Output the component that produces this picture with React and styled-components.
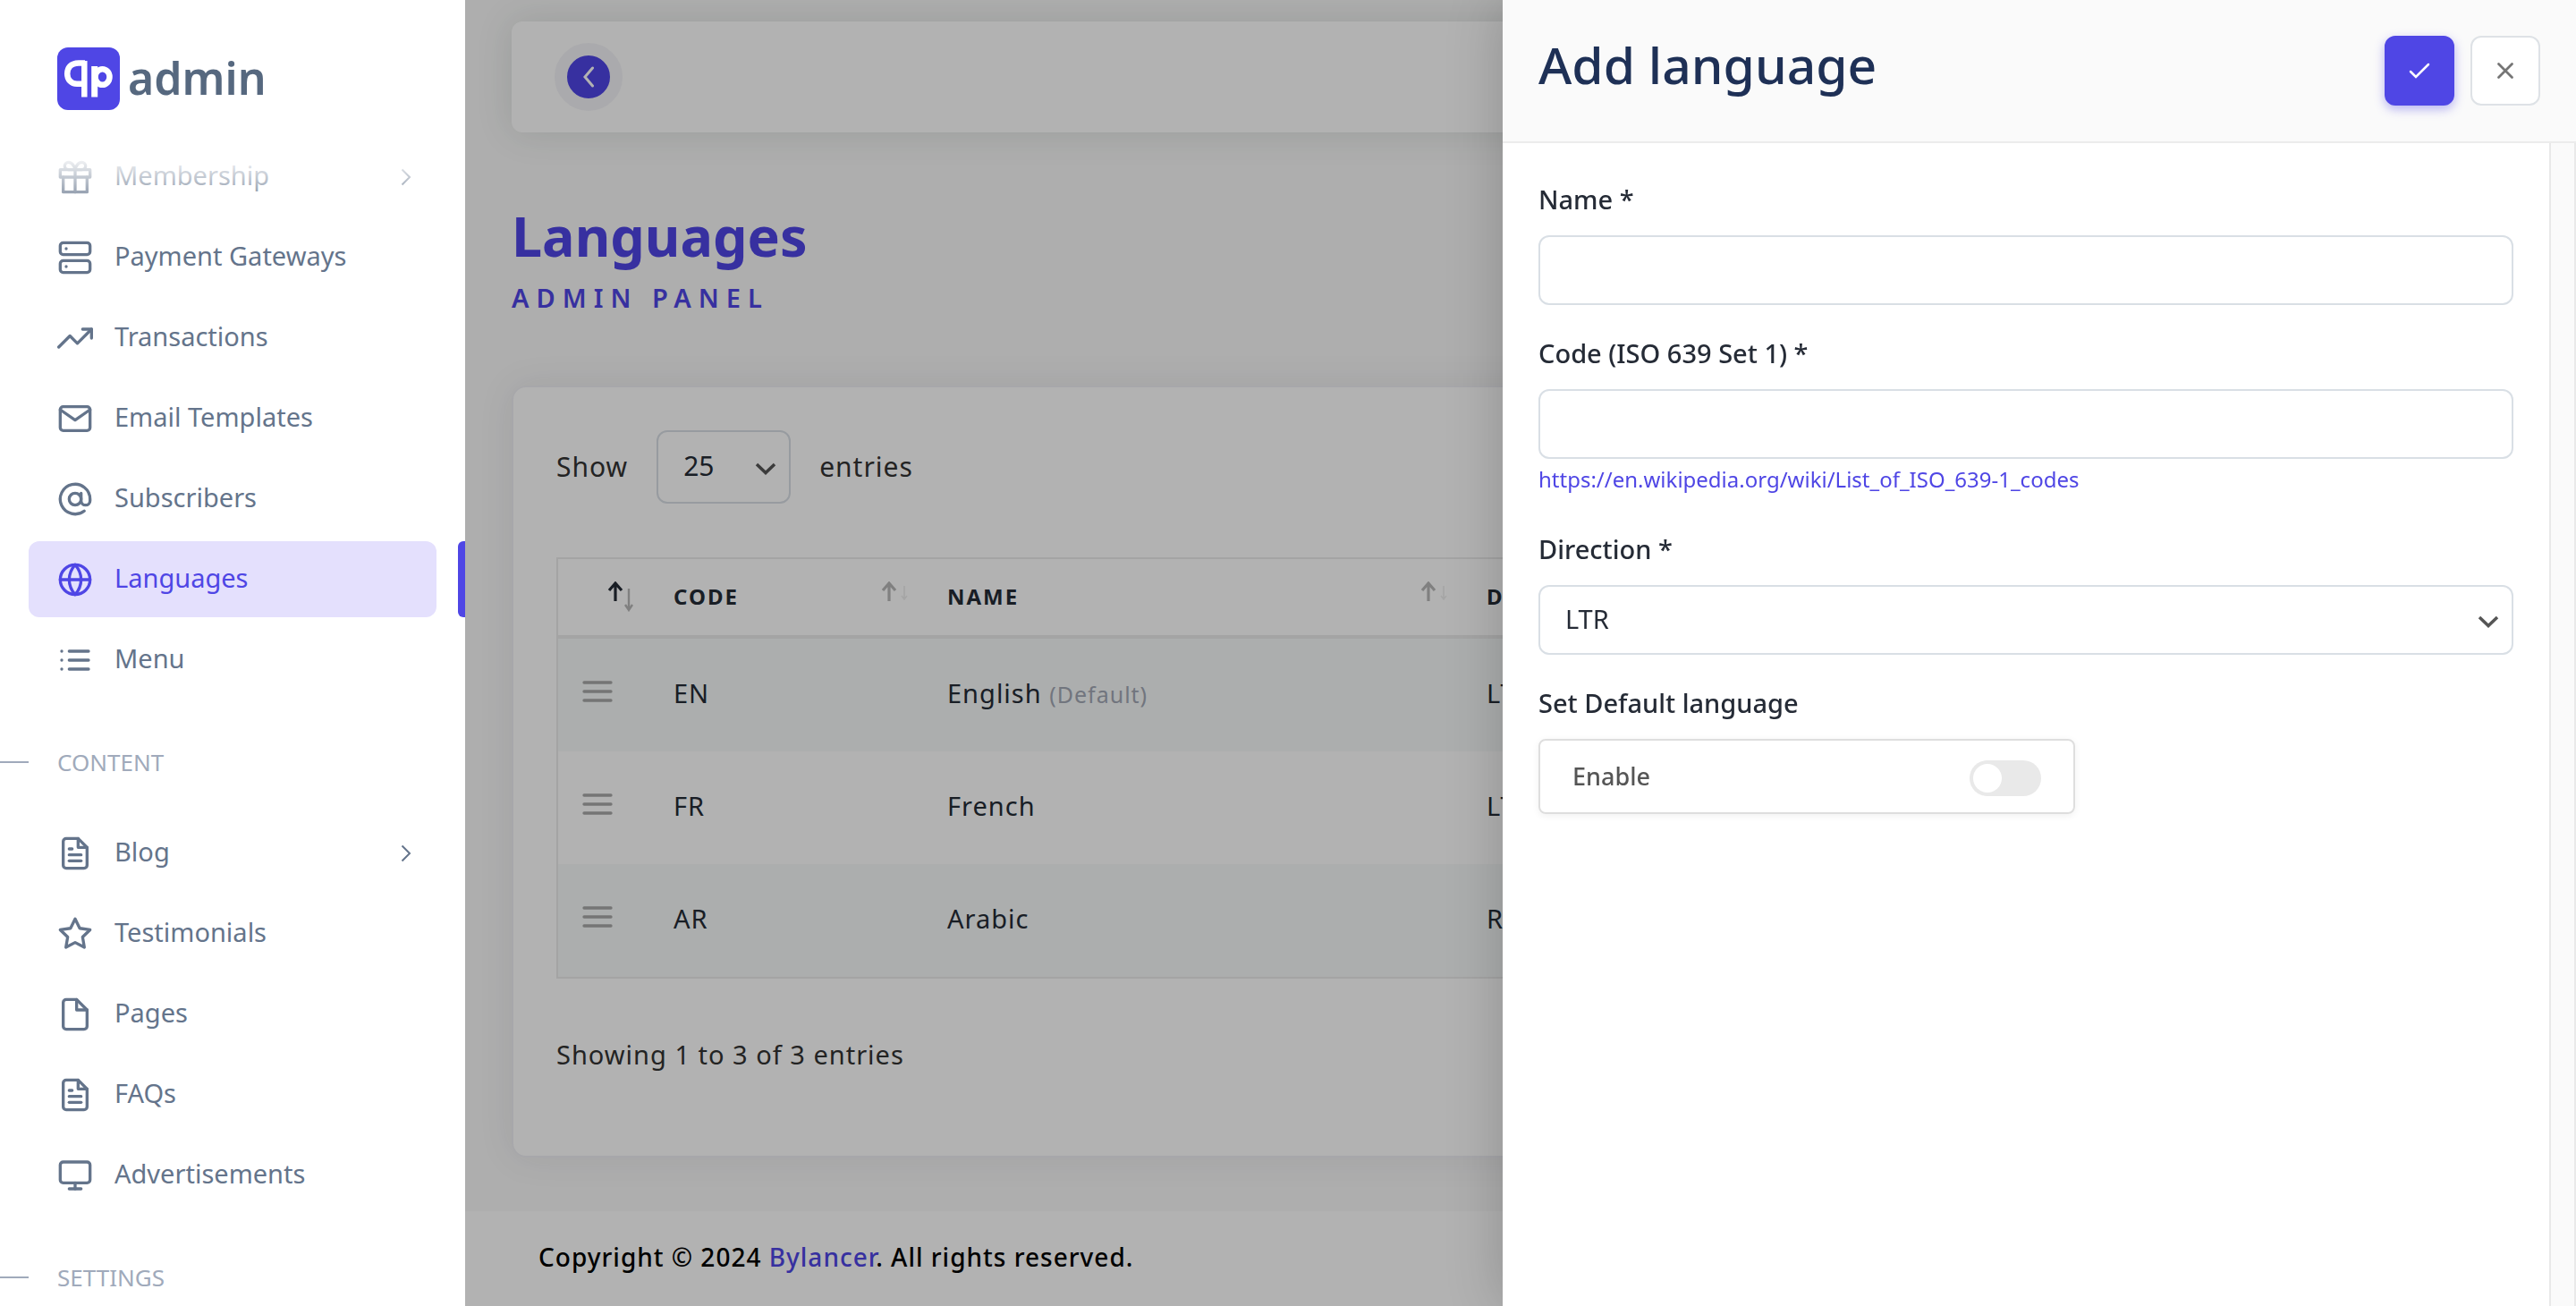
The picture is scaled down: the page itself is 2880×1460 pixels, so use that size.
import React, { useState } from "react";
import styled, { createGlobalStyle, css } from "styled-components";
import {
  FiAtSign,
  FiFile,
  FiFileText,
  FiGift,
  FiGlobe,
  FiList,
  FiMail,
  FiMenu,
  FiMonitor,
  FiServer,
  FiStar,
  FiTrendingUp
} from "react-icons/fi";

const GlobalStyle = createGlobalStyle`
  * {
    box-sizing: border-box;
  }

  body {
    margin: 0;
    background: #f9f9f9;
    color: #252b36;
    font-family: "Noto Sans", "Open Sans", sans-serif;
    font-size: 29px;
    line-height: 50px;
  }

  button, input, select {
    font: inherit;
    color: inherit;
  }

  a {
    color: #4f46e5;
    text-decoration: none;
  }
`;

const Layout = styled.div`
  display: flex;
  height: 100vh;
  overflow: hidden;
`;

/* Sidebar */

const Sidebar = styled.aside`
  position: relative;
  flex: 0 0 520px;
  height: 100vh;
  overflow: hidden;
  background: #fff;
`;

const Brand = styled.a`
  display: flex;
  align-items: center;
  gap: 9px;
  height: 152px;
  padding: 24px 64px 0;
  color: #56687f;
`;

const BrandName = styled.span`
  padding-bottom: 2px;
  font-size: 50px;
  font-weight: 600;
  line-height: 70px;
`;

const TopFade = styled.div`
  position: absolute;
  top: 152px;
  left: 0;
  right: 0;
  height: 85px;
  background: linear-gradient(#fff 25%, rgba(255, 255, 255, 0));
  pointer-events: none;
`;

const NavList = styled.ul`
  list-style: none;
  margin: 0;
  padding: 0;
`;

const NavItem = styled.li`
  display: flex;
  justify-content: space-between;
  padding: 3px 0 2px 32px;
`;

const NavLink = styled.a`
  display: flex;
  align-items: center;
  gap: 24px;
  width: 456px;
  height: 85px;
  padding: 0 28px 0 32px;
  border-radius: 12px;
  color: #64748b;

  ${props =>
    props.$active &&
    css`
      background: #e4e0fd;
      color: #4f46e5;
    `}
`;

const NavLabel = styled.span`
  flex: 1;
  padding-bottom: 4px;
`;

const ActiveMark = styled.span`
  width: 8px;
  border-radius: 6px 0 0 6px;
  background: #4f46e5;
`;

const NavCategory = styled.h2`
  display: flex;
  align-items: center;
  gap: 32px;
  height: 126px;
  padding-top: 14px;
  margin: 0;
  color: #a0aabb;
  font-size: 26px;
  font-weight: 400;
  text-transform: uppercase;

  &::before {
    content: "";
    width: 32px;
    height: 2px;
    background: #a0aabb;
  }
`;

/* Main column */

const Main = styled.main`
  position: relative;
  display: flex;
  flex: 1;
  flex-direction: column;
  min-width: 0;
  background: #f9f9f9;
`;

const Content = styled.div`
  padding: 24px 52px 60px;
`;

const TopBar = styled.header`
  padding: 24px 48px;
  border-radius: 12px;
  background: #fff;
  box-shadow: 0 0 40px rgba(30, 60, 50, 0.13);
`;

const BackButton = styled.button`
  display: flex;
  align-items: center;
  justify-content: center;
  width: 76px;
  height: 76px;
  padding: 0;
  border: 14px solid #f4f4f8;
  border-radius: 50%;
  background: #4f46e5;
  color: #fff;
`;

const PageHeading = styled.div`
  margin: 72px 0 73px;
  color: #4f46e5;
`;

const PageTitle = styled.h1`
  margin: 0;
  font-size: 61px;
  font-weight: 700;
  line-height: 88px;
`;

const PageSubtitle = styled.p`
  margin: 0;
  font-weight: 600;
  letter-spacing: 8px;
  text-transform: uppercase;
`;

const Card = styled.section`
  padding: 48px 48px 86px;
  border: 2px solid #f0f0f4;
  border-radius: 16px;
  background: #fff;
  box-shadow: 0 0 40px rgba(40, 40, 70, 0.08);
  letter-spacing: 1px;
`;

const LengthRow = styled.label`
  display: flex;
  align-items: center;
  gap: 32px;
  margin-bottom: 60px;
  color: #333;
  font-size: 30px;
`;

const SelectWrap = styled.div`
  position: relative;
  width: ${props => props.$width || "100%"};

  svg {
    position: absolute;
    top: calc(50% - 5px);
    right: 16px;
    color: #555;
    pointer-events: none;
  }
`;

const Select = styled.select`
  display: block;
  width: 100%;
  height: ${props => (props.$tall ? "82px" : "78px")};
  padding: 0 28px 2px;
  border: 2px solid #d9dfe5;
  border-radius: 12px;
  background: #fff;
  color: #252b36;
  appearance: none;
`;

const Table = styled.table`
  width: 100%;
  border: 2px solid #ebebeb;
  border-collapse: separate;
  border-spacing: 0;
  table-layout: fixed;
`;

const HeadCell = styled.th`
  width: ${props => props.$width};
  height: 89px;
  padding: 0 20px 2px 24px;
  border-bottom: 4px solid #ebebeb;
  font-size: 24px;
  font-weight: 700;
  letter-spacing: 2px;
  line-height: 36px;
  text-align: left;
  text-transform: uppercase;
`;

const HeadContent = styled.div`
  display: flex;
  align-items: center;
  justify-content: space-between;
`;

const Row = styled.tr`
  background: #fff;

  &:nth-child(odd) {
    background: #f7faf9;
  }
`;

const Cell = styled.td`
  height: 126px;
  padding: 0 24px 4px;
  vertical-align: middle;
`;

const HandleCell = styled(Cell)`
  padding-bottom: 8px;
  color: #a8a8a8;

  svg {
    display: block;
  }
`;

const DefaultTag = styled.small`
  color: #a3a8b5;
  font-size: 25px;
`;

const TableInfo = styled.p`
  margin: 60px 0 2px;
  color: #333;
`;

const Footer = styled.footer`
  flex: 1;
  padding: 26px 82px;
  background: #fff;
  color: #000;
  font-size: 28px;
  font-weight: 500;
  letter-spacing: 1px;
`;

const Backdrop = styled.div`
  position: absolute;
  inset: 0;
  background: rgba(0, 0, 0, 0.3);
`;

/* Slide-over panel */

const Drawer = styled.aside`
  position: fixed;
  top: 0;
  right: 0;
  bottom: 0;
  display: flex;
  flex-direction: column;
  width: 1200px;
  max-width: 100%;
  background: #fff;
  box-shadow: 0 0 60px rgba(0, 0, 0, 0.2);
`;

const DrawerHeader = styled.header`
  display: flex;
  align-items: flex-start;
  gap: 18px;
  padding: 40px;
  border-bottom: 2px solid #ececec;
  background: #fafafa;
`;

const DrawerTitle = styled.h2`
  flex: 1;
  margin: 0;
  color: #1e3056;
  font-size: 57px;
  font-weight: 500;
  line-height: 64px;
`;

const IconButton = styled.button`
  display: flex;
  align-items: center;
  justify-content: center;
  width: 78px;
  height: 78px;
  padding: 0;
  border: 2px solid #dee2e6;
  border-radius: 12px;
  background: #fff;
  color: #757575;

  ${props =>
    props.$primary &&
    css`
      border-color: #4f46e5;
      background: #4f46e5;
      color: #fff;
      box-shadow: 0 4px 12px rgba(79, 70, 229, 0.4);
    `}
`;

const DrawerBody = styled.div`
  display: flex;
  flex: 1;
`;

const ScrollTrack = styled.div`
  width: 30px;
  border: solid #e9e9e9;
  border-width: 0 2px;
  background: #fafafa;
`;

const Form = styled.form`
  flex: 1;
  padding: 40px;
`;

const Field = styled.div`
  margin-bottom: 31px;
`;

const FieldLabel = styled.label`
  display: block;
  margin-bottom: 18px;
  font-weight: 500;
  line-height: 45px;
`;

const TextInput = styled.input`
  display: block;
  width: 100%;
  height: 78px;
  padding: 0 28px;
  border: 2px solid #d9dfe5;
  border-radius: 12px;
  outline: none;
`;

const HelpLink = styled.a`
  display: block;
  margin: 2px 0 34px;
  font-size: 24px;
  line-height: 42px;
`;

const ToggleBox = styled.label`
  display: flex;
  align-items: center;
  justify-content: space-between;
  width: 600px;
  height: 84px;
  padding: 0 36px;
  border: 2px solid #dedede;
  border-radius: 8px;
  color: #555;
  font-size: 27px;
  font-weight: 500;
  box-shadow: 0 2px 8px rgba(0, 0, 0, 0.06);
`;

const Toggle = styled.input`
  width: 80px;
  height: 40px;
  margin: 4px 0 0;
  padding: 4px;
  border-radius: 20px;
  background: #e9e9e9;
  appearance: none;

  &::before {
    content: "";
    display: block;
    width: 32px;
    height: 32px;
    border-radius: 50%;
    background: #fff;
  }

  &:checked {
    background: #4f46e5;
  }

  &:checked::before {
    margin-left: auto;
  }
`;

const Logo = () => (
  <svg width="70" height="70" viewBox="0 0 70 70" fill="none">
    <rect width="70" height="70" rx="12" fill="#4f46e5" />
    <g stroke="#fff" strokeWidth="6.500">
      <path d="M30.300 55.500V15" />
      <path d="M31 17.500H24C15 17.500 11.200 23 11.200 29.500S15.500 40.800 22 40.800H31" />
      <path d="M41.700 55.500V21" strokeWidth="7" />
      <ellipse cx="50.500" cy="33" rx="8" ry="8.800" />
    </g>
  </svg>
);

const ChevronRight = () => (
  <svg width="12" height="20" viewBox="0 0 12 20" fill="none">
    <path d="M1.500 1.500L10 10l-8.500 8.500" stroke="currentColor" strokeWidth="2" />
  </svg>
);

const ChevronLeft = () => (
  <svg width="14" height="24" viewBox="0 0 14 24" fill="none">
    <path
      d="M11.500 2L3 12l8.500 10"
      stroke="currentColor"
      strokeWidth="3"
      strokeLinecap="round"
    />
  </svg>
);

const ChevronDown = () => (
  <svg width="24" height="14" viewBox="0 0 24 14" fill="none">
    <path d="M2 2l10 9.500L22 2" stroke="currentColor" strokeWidth="3.500" />
  </svg>
);

const CheckIcon = () => (
  <svg width="26" height="20" viewBox="0 0 26 20" fill="none">
    <path
      d="M3 11l6 6L23 3"
      stroke="currentColor"
      strokeWidth="2.500"
      strokeLinecap="round"
    />
  </svg>
);

const CloseIcon = () => (
  <svg width="20" height="20" viewBox="0 0 20 20" fill="none">
    <path
      d="M2.500 2.500l15 15M17.500 2.500l-15 15"
      stroke="currentColor"
      strokeWidth="2.800"
      strokeLinecap="round"
    />
  </svg>
);

const SortIcon = ({ active }) => (
  <svg width="32" height="34" viewBox="0 0 32 34" fill="none">
    <path
      d="M11 22V3M4 10l7-8 7 8"
      stroke={active ? "#252b36" : "#b8b8b8"}
      strokeWidth="3.200"
    />
    {active ? (
      <path d="M26 8v23M22 26l4 6 4-6" stroke="#b8b8b8" strokeWidth="2.400" />
    ) : (
      <path d="M28 5v15M25 16l3 4 3-4" stroke="#ececec" strokeWidth="1.500" />
    )}
  </svg>
);

const mainLinks = [
  { label: "Membership", icon: FiGift, children: true },
  { label: "Payment Gateways", icon: FiServer },
  { label: "Transactions", icon: FiTrendingUp },
  { label: "Email Templates", icon: FiMail },
  { label: "Subscribers", icon: FiAtSign },
  { label: "Languages", icon: FiGlobe, active: true },
  { label: "Menu", icon: FiList }
];

const contentLinks = [
  { label: "Blog", icon: FiFileText, children: true },
  { label: "Testimonials", icon: FiStar },
  { label: "Pages", icon: FiFile },
  { label: "FAQs", icon: FiFileText },
  { label: "Advertisements", icon: FiMonitor }
];

const languages = [
  { code: "EN", name: "English", direction: "LTR", isDefault: true },
  { code: "FR", name: "French", direction: "LTR" },
  { code: "AR", name: "Arabic", direction: "RTL" }
];

const NavGroup = ({ links }) => (
  <NavList>
    {links.map(({ label, icon: Icon, active, children }) => (
      <NavItem key={label}>
        <NavLink href="#" $active={active}>
          <Icon size={40} />
          <NavLabel>{label}</NavLabel>
          {children && <ChevronRight />}
        </NavLink>
        {active && <ActiveMark />}
      </NavItem>
    ))}
  </NavList>
);

const LanguageTable = () => (
  <Table>
    <thead>
      <tr>
        <HeadCell $width="105px">
          <HeadContent>
            <span />
            <SortIcon active />
          </HeadContent>
        </HeadCell>
        <HeadCell $width="306px">
          <HeadContent>
            Code <SortIcon />
          </HeadContent>
        </HeadCell>
        <HeadCell $width="603px">
          <HeadContent>
            Name <SortIcon />
          </HeadContent>
        </HeadCell>
        <HeadCell>
          <HeadContent>
            Direction <SortIcon />
          </HeadContent>
        </HeadCell>
      </tr>
    </thead>
    <tbody>
      {languages.map(language => (
        <Row key={language.code}>
          <HandleCell>
            <FiMenu size={40} />
          </HandleCell>
          <Cell>{language.code}</Cell>
          <Cell>
            {language.name}{" "}
            {language.isDefault && <DefaultTag>(Default)</DefaultTag>}
          </Cell>
          <Cell>{language.direction}</Cell>
        </Row>
      ))}
    </tbody>
  </Table>
);

const AddLanguage = () => {
  const [name, setName] = useState("");
  const [code, setCode] = useState("");
  const [direction, setDirection] = useState("LTR");
  const [isDefault, setIsDefault] = useState(false);

  return (
    <Drawer>
      <DrawerHeader>
        <DrawerTitle>Add language</DrawerTitle>
        <IconButton $primary type="submit" form="language-form" aria-label="Save">
          <CheckIcon />
        </IconButton>
        <IconButton type="button" aria-label="Close">
          <CloseIcon />
        </IconButton>
      </DrawerHeader>
      <DrawerBody>
        <Form id="language-form" onSubmit={e => e.preventDefault()}>
          <Field>
            <FieldLabel htmlFor="name">Name *</FieldLabel>
            <TextInput
              id="name"
              value={name}
              onChange={e => setName(e.target.value)}
            />
          </Field>
          <Field>
            <FieldLabel htmlFor="code">Code (ISO 639 Set 1) *</FieldLabel>
            <TextInput
              id="code"
              value={code}
              onChange={e => setCode(e.target.value)}
            />
            <HelpLink href="https://en.wikipedia.org/wiki/List_of_ISO_639-1_codes">
              https://en.wikipedia.org/wiki/List_of_ISO_639-1_codes
            </HelpLink>
          </Field>
          <Field>
            <FieldLabel htmlFor="direction">Direction *</FieldLabel>
            <SelectWrap>
              <Select
                id="direction"
                value={direction}
                onChange={e => setDirection(e.target.value)}
              >
                <option>LTR</option>
                <option>RTL</option>
              </Select>
              <ChevronDown />
            </SelectWrap>
          </Field>
          <Field>
            <FieldLabel htmlFor="default">Set Default language</FieldLabel>
            <ToggleBox>
              Enable
              <Toggle
                id="default"
                type="checkbox"
                checked={isDefault}
                onChange={e => setIsDefault(e.target.checked)}
              />
            </ToggleBox>
          </Field>
        </Form>
        <ScrollTrack />
      </DrawerBody>
    </Drawer>
  );
};

const App = () => (
  <Layout>
    <GlobalStyle />
    <Sidebar>
      <Brand href="#">
        <Logo />
        <BrandName>admin</BrandName>
      </Brand>
      <nav>
        <NavGroup links={mainLinks} />
        <NavCategory>Content</NavCategory>
        <NavGroup links={contentLinks} />
        <NavCategory>Settings</NavCategory>
      </nav>
      <TopFade />
    </Sidebar>
    <Main>
      <Content>
        <TopBar>
          <BackButton type="button" aria-label="Back">
            <ChevronLeft />
          </BackButton>
        </TopBar>
        <PageHeading>
          <PageTitle>Languages</PageTitle>
          <PageSubtitle>Admin Panel</PageSubtitle>
        </PageHeading>
        <Card>
          <LengthRow>
            Show
            <SelectWrap $width="150px">
              <Select $tall defaultValue="25">
                <option>10</option>
                <option>25</option>
                <option>50</option>
              </Select>
              <ChevronDown />
            </SelectWrap>
            entries
          </LengthRow>
          <LanguageTable />
          <TableInfo>Showing 1 to 3 of 3 entries</TableInfo>
        </Card>
      </Content>
      <Footer>
        Copyright © 2024 <a href="#">Bylancer</a>. All rights reserved.
      </Footer>
      <Backdrop />
    </Main>
    <AddLanguage />
  </Layout>
);

export default App;
